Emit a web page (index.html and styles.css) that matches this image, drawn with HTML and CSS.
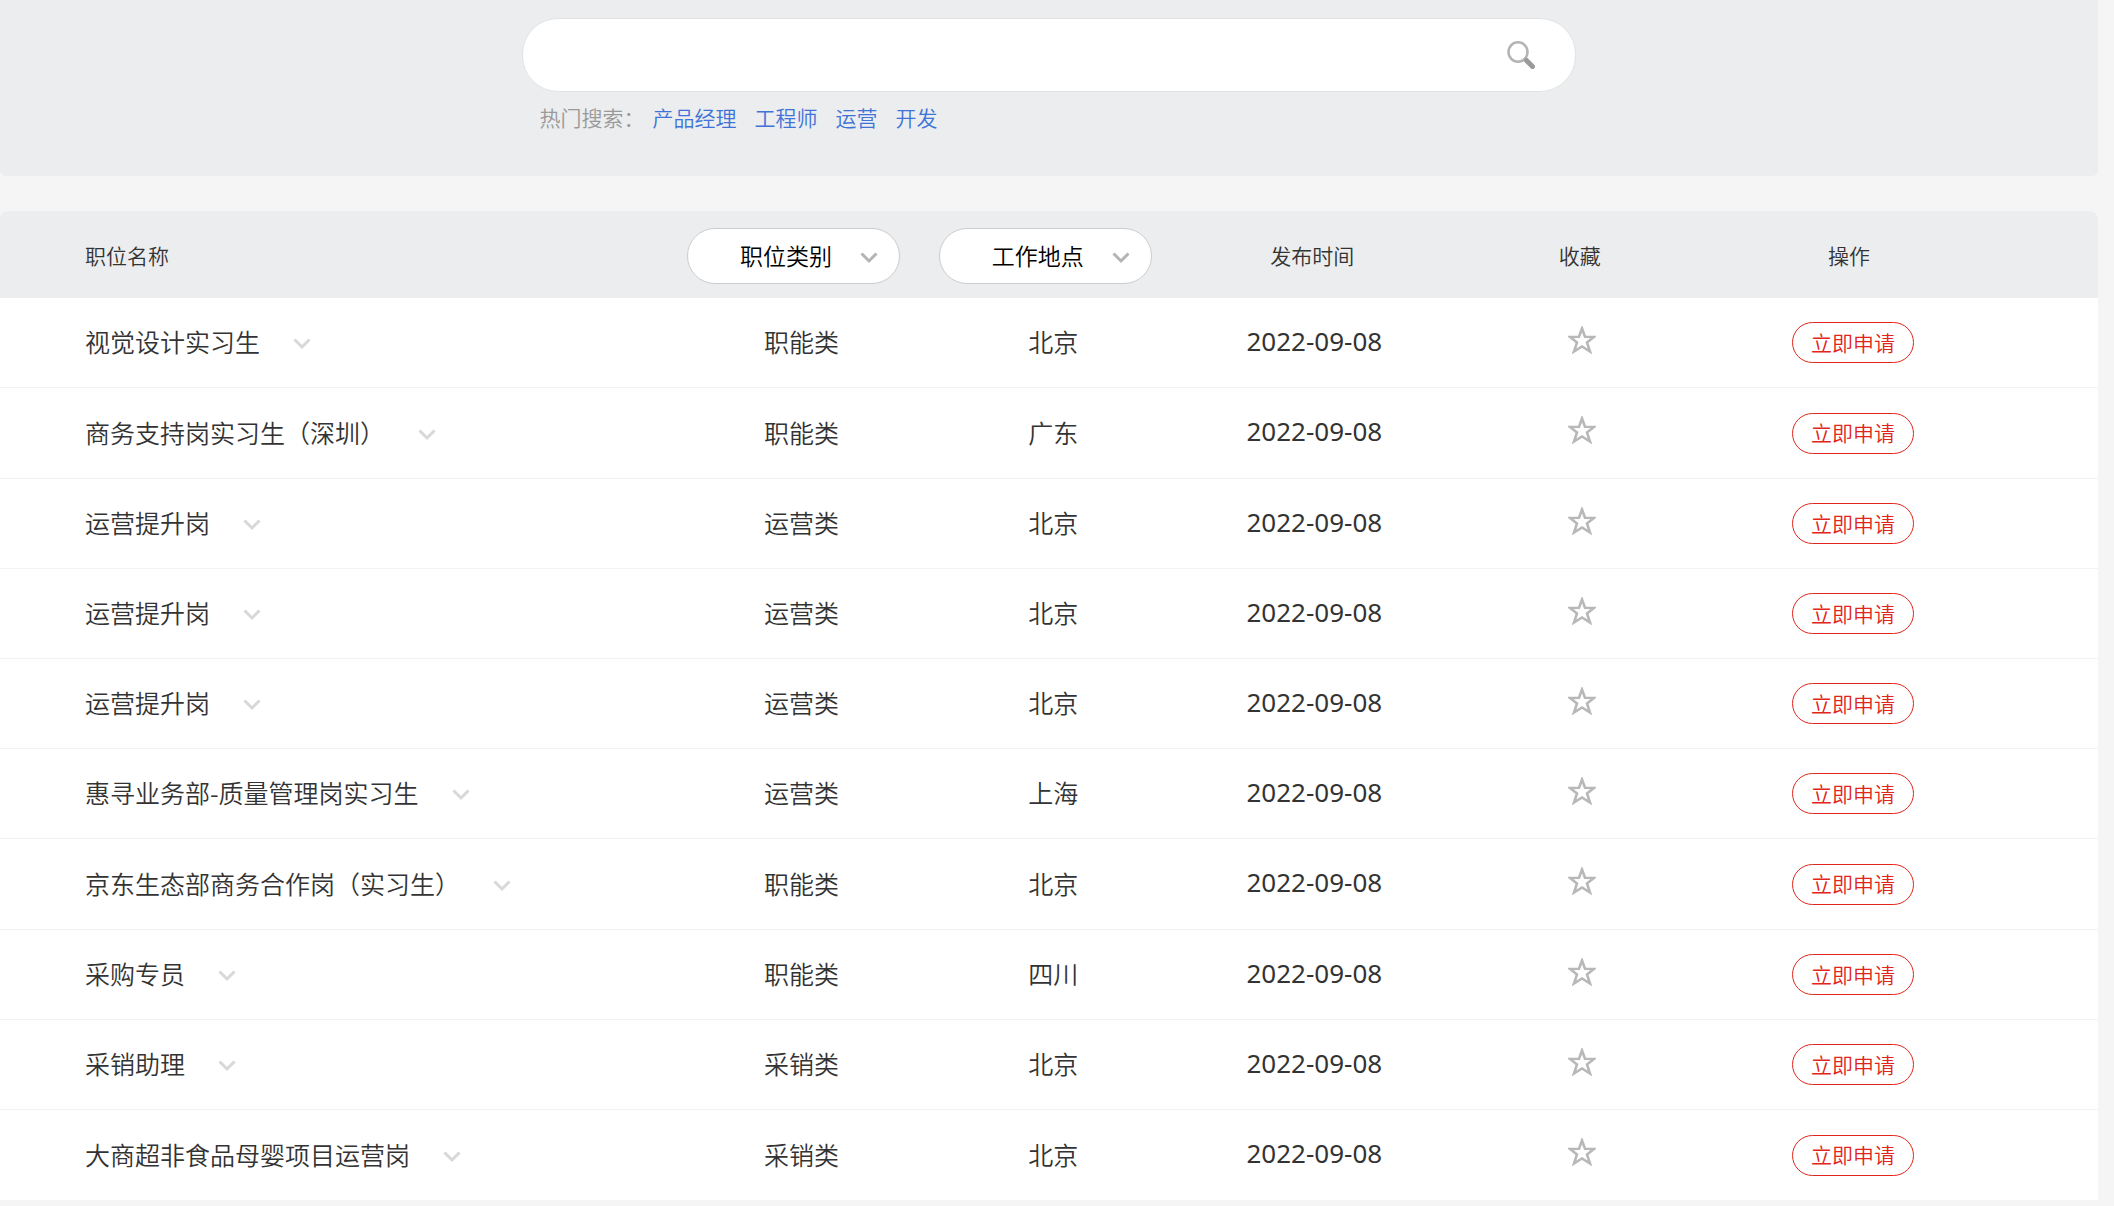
FILE: index.html
```html
<!DOCTYPE html>
<html lang="zh-CN">
<head>
<meta charset="utf-8">
<meta name="viewport" content="width=device-width, initial-scale=1">
<title>职位列表</title>
<link rel="stylesheet" href="styles.css">
</head>
<body>
<svg class="sprite" aria-hidden="true">
  <symbol id="chevron" viewBox="0 0 18 12"><path d="M1.5 1.5 9 9 16.500 1.500" fill="none" stroke="currentColor" stroke-width="3"/></symbol>
  <symbol id="star" viewBox="0 0 28 28"><path d="M14 2.500 17 10.700 26 11 19 16.500 22 25.500 14 20.500 6 25.500 9 16.500 2 11 11 10.700Z" fill="none" stroke="currentColor" stroke-width="2.600"/></symbol>
</svg>
<main class="page">
  <section class="search">
    <form class="search-box" role="search">
      <input class="search-input" type="text" aria-label="搜索职位">
      <button class="search-button" type="button" aria-label="搜索">
        <svg class="search-icon" viewBox="0 0 28 28"><ellipse cx="11" cy="11" rx="9.500" ry="9.700" fill="none" stroke="#b4b4b4" stroke-width="2.500"/><path d="m19.500 19.500 6 6" stroke="#9a9a9a" stroke-width="5" stroke-linecap="round"/></svg>
      </button>
    </form>
    <nav class="hot" aria-label="热门搜索">
      <span class="hot-label">热门搜索：</span>
      <a href="#">产品经理</a>
      <a href="#">工程师</a>
      <a href="#">运营</a>
      <a href="#">开发</a>
    </nav>
  </section>

  <table class="jobs">
    <colgroup>
      <col class="col-name"><col class="col-type"><col class="col-place"><col class="col-date"><col class="col-fav"><col class="col-action">
    </colgroup>
    <thead>
      <tr>
        <th class="name" scope="col">职位名称</th>
        <th class="filter-cell" scope="col"><span class="filter"><select class="filter-select" aria-label="职位类别"><option>职位类别</option></select><svg class="filter-arrow"><use href="#chevron"/></svg></span></th>
        <th class="filter-cell" scope="col"><span class="filter"><select class="filter-select" aria-label="工作地点"><option>工作地点</option></select><svg class="filter-arrow"><use href="#chevron"/></svg></span></th>
        <th class="plain" scope="col">发布时间</th>
        <th class="plain" scope="col">收藏</th>
        <th class="action" scope="col">操作</th>
      </tr>
    </thead>
    <tbody>
      <tr><td class="name"><button class="toggle" type="button">视觉设计实习生<svg class="arrow"><use href="#chevron"/></svg></button></td><td>职能类</td><td>北京</td><td class="date">2022-09-08</td><td><button class="fav" type="button" aria-label="收藏"><svg class="star"><use href="#star"/></svg></button></td><td class="action"><button class="apply" type="button">立即申请</button></td></tr>
      <tr><td class="name"><button class="toggle" type="button">商务支持岗实习生（深圳）<svg class="arrow"><use href="#chevron"/></svg></button></td><td>职能类</td><td>广东</td><td class="date">2022-09-08</td><td><button class="fav" type="button" aria-label="收藏"><svg class="star"><use href="#star"/></svg></button></td><td class="action"><button class="apply" type="button">立即申请</button></td></tr>
      <tr><td class="name"><button class="toggle" type="button">运营提升岗<svg class="arrow"><use href="#chevron"/></svg></button></td><td>运营类</td><td>北京</td><td class="date">2022-09-08</td><td><button class="fav" type="button" aria-label="收藏"><svg class="star"><use href="#star"/></svg></button></td><td class="action"><button class="apply" type="button">立即申请</button></td></tr>
      <tr><td class="name"><button class="toggle" type="button">运营提升岗<svg class="arrow"><use href="#chevron"/></svg></button></td><td>运营类</td><td>北京</td><td class="date">2022-09-08</td><td><button class="fav" type="button" aria-label="收藏"><svg class="star"><use href="#star"/></svg></button></td><td class="action"><button class="apply" type="button">立即申请</button></td></tr>
      <tr><td class="name"><button class="toggle" type="button">运营提升岗<svg class="arrow"><use href="#chevron"/></svg></button></td><td>运营类</td><td>北京</td><td class="date">2022-09-08</td><td><button class="fav" type="button" aria-label="收藏"><svg class="star"><use href="#star"/></svg></button></td><td class="action"><button class="apply" type="button">立即申请</button></td></tr>
      <tr><td class="name"><button class="toggle" type="button">惠寻业务部-质量管理岗实习生<svg class="arrow"><use href="#chevron"/></svg></button></td><td>运营类</td><td>上海</td><td class="date">2022-09-08</td><td><button class="fav" type="button" aria-label="收藏"><svg class="star"><use href="#star"/></svg></button></td><td class="action"><button class="apply" type="button">立即申请</button></td></tr>
      <tr><td class="name"><button class="toggle" type="button">京东生态部商务合作岗（实习生）<svg class="arrow"><use href="#chevron"/></svg></button></td><td>职能类</td><td>北京</td><td class="date">2022-09-08</td><td><button class="fav" type="button" aria-label="收藏"><svg class="star"><use href="#star"/></svg></button></td><td class="action"><button class="apply" type="button">立即申请</button></td></tr>
      <tr><td class="name"><button class="toggle" type="button">采购专员<svg class="arrow"><use href="#chevron"/></svg></button></td><td>职能类</td><td>四川</td><td class="date">2022-09-08</td><td><button class="fav" type="button" aria-label="收藏"><svg class="star"><use href="#star"/></svg></button></td><td class="action"><button class="apply" type="button">立即申请</button></td></tr>
      <tr><td class="name"><button class="toggle" type="button">采销助理<svg class="arrow"><use href="#chevron"/></svg></button></td><td>采销类</td><td>北京</td><td class="date">2022-09-08</td><td><button class="fav" type="button" aria-label="收藏"><svg class="star"><use href="#star"/></svg></button></td><td class="action"><button class="apply" type="button">立即申请</button></td></tr>
      <tr><td class="name"><button class="toggle" type="button">大商超非食品母婴项目运营岗<svg class="arrow"><use href="#chevron"/></svg></button></td><td>采销类</td><td>北京</td><td class="date">2022-09-08</td><td><button class="fav" type="button" aria-label="收藏"><svg class="star"><use href="#star"/></svg></button></td><td class="action"><button class="apply" type="button">立即申请</button></td></tr>
    </tbody>
  </table>
</main>
</body>
</html>
```
FILE: styles.css
```css
* { box-sizing: border-box; }

body {
  margin: 0;
  background: #f5f5f5;
  color: #333;
  font-family: "Noto Sans CJK SC", "Noto Sans", sans-serif;
  font-size: 21px;
  font-weight: 350;
}

button, select, input {
  font: inherit;
  color: inherit;
}

button {
  padding: 0;
  border: 0;
  background: none;
  cursor: pointer;
}

.sprite {
  position: absolute;
  width: 0;
  height: 0;
}

.page {
  margin-right: 16px;
  padding-bottom: 6px;
}

/* Search */
.search {
  padding: 18px 0 42px;
  border-radius: 0 0 6px 6px;
  background: #ebedef;
}

.search-box {
  display: flex;
  align-items: center;
  width: 50.2%;
  height: 74px;
  margin: 0 auto;
  padding: 0 40px 0 34px;
  border: 1px solid #e1e3e4;
  border-radius: 36px;
  background: #fff;
}

.search-input {
  flex: 1;
  min-width: 0;
  height: 48px;
  border: 0;
  outline: 0;
  background: none;
}

.search-icon {
  display: block;
  width: 28px;
  height: 28px;
}

.hot {
  display: flex;
  gap: 18px;
  width: 50.2%;
  margin: 9px auto 0;
  padding: 0 0 1px 17px;
  line-height: 32px;
}

.hot-label {
  margin-right: -10px;
  color: #999;
}

.hot a {
  color: #3f73d8;
  text-decoration: none;
}

/* Job table */
.jobs {
  width: 100%;
  margin-top: 35px;
  border-collapse: separate;
  border-spacing: 0;
  table-layout: fixed;
  background: #fff;
  border-radius: 8px 8px 0 0;
}

.col-name { width: 32.2%; }
.col-type, .col-place { width: 12%; }
.col-date { width: 12.9%; }
.col-fav { width: 12.6%; }

th, td {
  padding: 0;
  text-align: center;
  vertical-align: middle;
}

th {
  height: 87px;
  background: #ebedef;
  font-weight: 350;
}

th:first-child { border-top-left-radius: 8px; }
th:last-child { border-top-right-radius: 8px; }

td {
  height: 90px;
  padding-bottom: 3px;
  border-bottom: 1px solid #f2f3f4;
  font-size: 25px;
  line-height: 36px;
}

tr:nth-child(5n+2) td { height: 91px; }
tr:last-child td { border-bottom: 0; }

.name {
  padding-left: 85px;
  text-align: left;
}

.action { padding: 0 106px 0 0; }
th.action { padding-right: 114px; }

.plain { padding-right: 4px; }
.filter-cell { padding: 2px 16px 0 0; }

.filter {
  display: inline-grid;
  align-items: center;
  width: 213px;
  vertical-align: middle;
}

.filter-select {
  grid-area: 1 / 1;
  width: 100%;
  height: 56px;
  padding: 0 52px 2px;
  border: 1px solid #ccc;
  border-radius: 28px;
  background: #fff;
  color: #000;
  font-size: 23px;
  appearance: none;
}

.filter-arrow {
  grid-area: 1 / 1;
  justify-self: end;
  width: 18px;
  height: 12px;
  margin: 4px 22px 0 0;
  color: #b4b4b4;
  pointer-events: none;
}

.toggle {
  display: flex;
  align-items: center;
  gap: 33px;
  white-space: nowrap;
}

.arrow {
  width: 18px;
  height: 12px;
  margin-top: 6px;
  color: #d8d8d8;
}

.date {
  padding-bottom: 4px;
  font-family: "Noto Sans", sans-serif;
  font-size: 26px;
  font-weight: 400;
}

.fav {
  display: block;
  margin: 0 auto 3px;
}

.star {
  display: block;
  width: 28px;
  height: 28px;
  color: #b8b8b8;
}

.apply {
  display: block;
  width: 122px;
  height: 41px;
  margin: 0 auto;
  padding-bottom: 2px;
  border: 1px solid #e1251b;
  border-radius: 21px;
  color: #e1251b;
  font-size: 21px;
}
```
